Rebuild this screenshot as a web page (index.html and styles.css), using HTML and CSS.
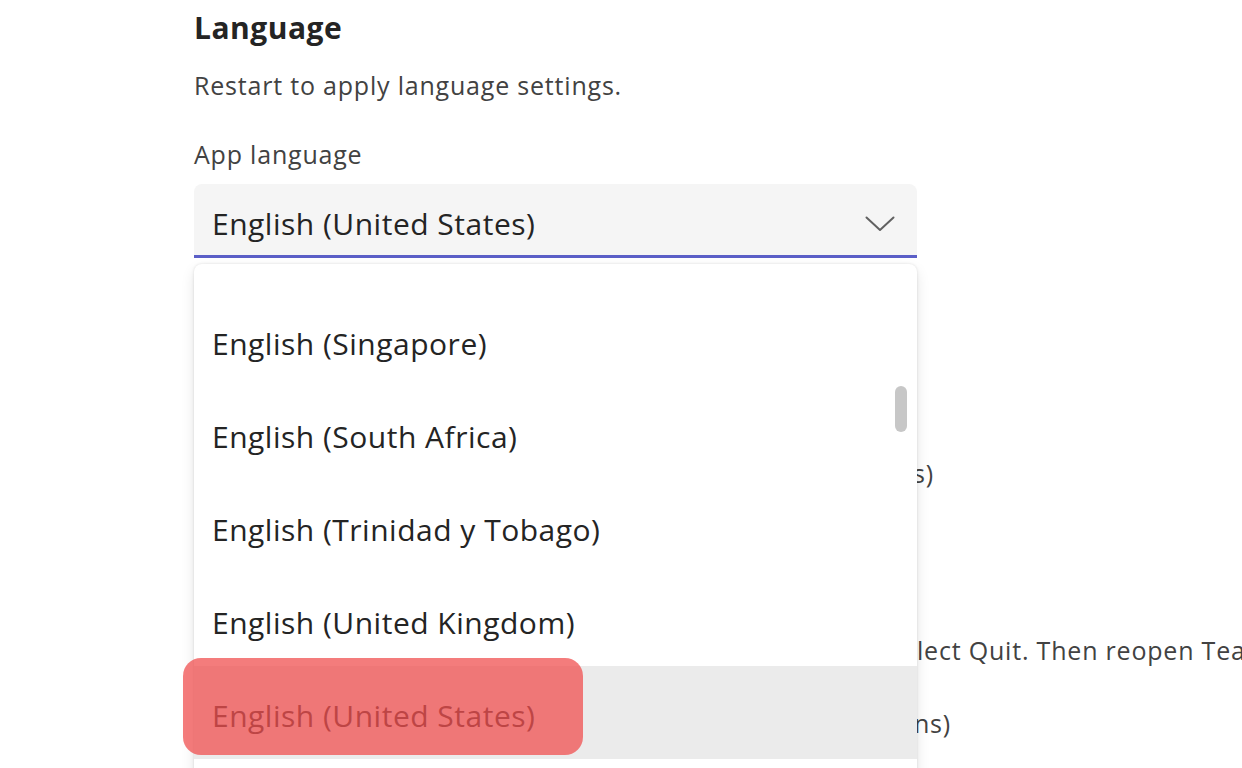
FILE: index.html
```html
<!DOCTYPE html>
<html lang="en">

<head>
  <meta charset="UTF-8">
  <title>Language settings</title>
  <link rel="stylesheet" href="styles.css">
</head>

<body>
  <div class="settings">

    <h2 class="title">Language</h2>
    <p class="hint">Restart to apply language settings.</p>

    <label class="label">App language</label>
    <div class="field">
      <div class="dropdown">
        <span class="value">English (United States)</span>
        <svg class="chevron" width="30" height="16" viewBox="0 0 30 16">
          <path d="M1.5 1.5 L15 14 L28.5 1.5" fill="none" stroke="#616161" stroke-width="2" stroke-linecap="round" stroke-linejoin="round"/>
        </svg>
      </div>

      <div class="listbox">
        <div class="option">English (Singapore)</div>
        <div class="option">English (South Africa)</div>
        <div class="option">English (Trinidad y Tobago)</div>
        <div class="option">English (United Kingdom)</div>
        <div class="option selected">English (United States)</div>
        <div class="scroll-thumb"></div>
      </div>

      <div class="mark"></div>
    </div>

    <div class="below">
      <div class="line first"><span>Keyboard language overrides shortcuts (Windows settings)</span></div>
      <div class="line second"><span class="cut"><span>To apply, right-click Teams in the taskbar and se</span></span><span>lect Quit. Then reopen Teams.</span></div>
      <div class="line third"><span>Use the same keyboard language for all regions)</span></div>
    </div>

  </div>
</body>

</html>
```

FILE: styles.css
```css
body {
  margin: 0;
  height: 768px;
  overflow: hidden;
  background: #ffffff;
  font-family: "Open Sans", "Noto Sans", sans-serif;
  color: #424242;
}

.settings {
  padding: 8px 0 0 194px;
}

.title {
  margin: 0;
  font-size: 30px;
  line-height: 40px;
  font-weight: 700;
  letter-spacing: 0.5px;
  color: #242424;
}

.hint {
  margin: 21px 0 0;
  font-size: 25px;
  line-height: 32px;
  letter-spacing: 0.8px;
}

.label {
  display: block;
  margin-top: 37px;
  font-size: 25px;
  line-height: 32px;
  letter-spacing: 0.8px;
}

.field {
  position: relative;
  width: 723px;
  margin-top: 14px;
}

.dropdown {
  display: flex;
  align-items: center;
  justify-content: space-between;
  height: 74px;
  padding: 8px 22px 0 18px;
  box-sizing: border-box;
  background: #f5f5f5;
  border-radius: 8px 8px 0 0;
  border-bottom: 3px solid #5b5fc7;
  font-size: 30px;
  letter-spacing: 0.5px;
  color: #242424;
}

.listbox {
  position: absolute;
  top: 80px;
  left: 0;
  width: 723px;
  height: 520px;
  padding-top: 30px;
  box-sizing: border-box;
  overflow: hidden;
  background: #ffffff;
  border-radius: 8px;
  box-shadow: 0 0 3px rgba(0, 0, 0, 0.12), 0 6px 14px rgba(0, 0, 0, 0.1);
  z-index: 2;
}

.option {
  display: flex;
  align-items: center;
  height: 93px;
  padding: 5px 0 0 18px;
  box-sizing: border-box;
  font-size: 30px;
  letter-spacing: 0.5px;
  color: #242424;
}

.option.selected {
  background: #ebebeb;
}

.scroll-thumb {
  position: absolute;
  top: 122px;
  right: 10px;
  width: 12px;
  height: 46px;
  border-radius: 6px;
  background: #c7c7c7;
}

/* red highlight drawn over the selected option */
.mark {
  position: absolute;
  left: -11px;
  top: 474px;
  width: 400px;
  height: 97px;
  border-radius: 18px;
  background: rgba(240, 80, 80, 0.75);
  z-index: 3;
}

.below {
  display: flex;
  flex-direction: column;
}

.line {
  display: flex;
  font-size: 25px;
  line-height: 32px;
  letter-spacing: 0.8px;
  white-space: nowrap;
  overflow: hidden;
}

.line.first {
  width: 740px;
  justify-content: flex-end;
  margin-top: 199px;
}

.line.second {
  margin-top: 145px;
}

.cut {
  display: flex;
  justify-content: flex-end;
  width: 723px;
  overflow: hidden;
  flex-shrink: 0;
}

.line.third {
  width: 757px;
  justify-content: flex-end;
  margin-top: 41px;
}
```
